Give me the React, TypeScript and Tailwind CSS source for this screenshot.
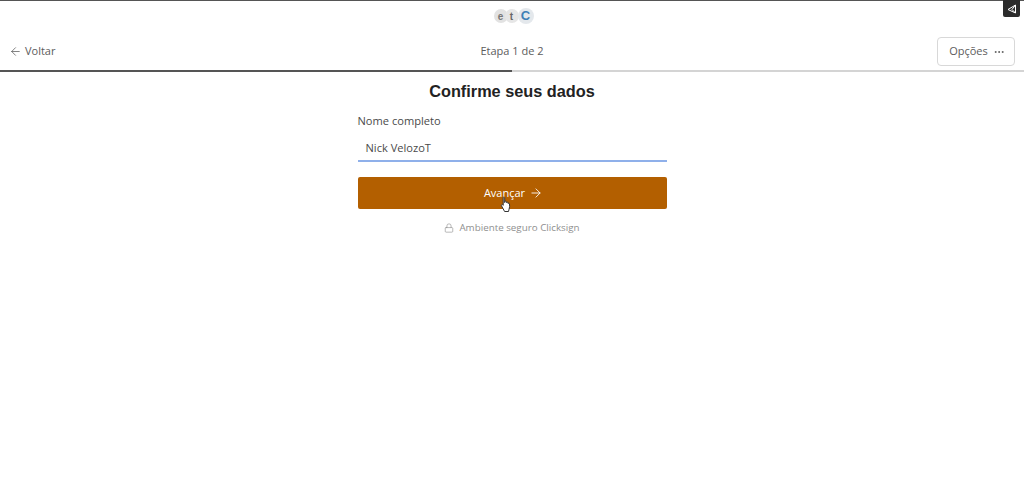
import { ArrowLeft, ArrowRight, Lock, Ellipsis } from "lucide-react";

function Logo() {
  return (
    <div className="flex h-[32px] items-center justify-center">
      <div className="relative flex items-center pb-[2px] pl-[3px]">
        <span className="flex h-[14px] w-[14px] items-center justify-center rounded-full bg-[#e2e2e2] font-['Liberation_Sans',sans-serif] text-[10px] font-bold text-[#777]">
          e
        </span>
        <span className="-ml-[3px] flex h-[14px] w-[14px] items-center justify-center rounded-full bg-[#e6e6e6] font-['Liberation_Sans',sans-serif] text-[10px] font-bold text-[#666]">
          t
        </span>
        <span className="-ml-[1px] flex h-[16px] w-[16px] items-center justify-center rounded-full bg-[#e4e8ec] font-['Liberation_Sans',sans-serif] text-[13px] font-bold text-[#3f7fb5]">
          C
        </span>
      </div>
    </div>
  );
}

function HandCursor() {
  return (
    <svg className="absolute left-[142px] top-[19px]" width="12" height="17" viewBox="0 0 12 17">
      <path
        d="M3.2 1.6c0-.8 1.5-.8 1.5 0v5l.2-1c.2-.7 1.4-.6 1.5.1l.1.9c.2-.7 1.3-.6 1.5.2l.1.8c.3-.6 1.3-.4 1.4.3.3 1.700.2 3.400-.4 5.200l-.6 2.400H4.600L1.500 9.800c-.5-.8.400-1.700 1.200-1l.5.5z"
        fill="#fff"
        stroke="#333"
        strokeWidth="1"
        strokeLinejoin="round"
      />
    </svg>
  );
}

export default function App() {
  return (
    <div className="relative min-h-[497px] bg-white font-['Open_Sans',sans-serif] text-[#4a4a4a]">
      <div className="h-[1px] bg-[#555]" />
      <Logo />

      <div className="flex h-[37px] items-center justify-between pl-[9px] pr-[9px]">
        <div className="flex w-[100px] items-center gap-[3px] text-[11px] text-[#5c5c5c]">
          <ArrowLeft size={13} strokeWidth={1.4} />
          <span>Voltar</span>
        </div>
        <span className="text-[11px] text-[#5c5c5c]">Etapa 1 de 2</span>
        <div className="flex w-[100px] justify-end">
          <div className="flex h-[29px] w-[78px] items-center justify-center gap-[5px] rounded-[4px] border border-[#d8d8d8] pl-[2px] text-[11px] text-[#5c5c5c]">
            <span>Opções</span>
            <Ellipsis size={12} strokeWidth={2} />
          </div>
        </div>
      </div>

      <div className="flex h-[2px] bg-[#d4d4d4]">
        <div className="w-1/2 bg-[#555]" />
      </div>

      <main className="mx-auto flex w-[309px] flex-col pt-[9px]">
        <h1 className="text-center font-['Liberation_Sans',sans-serif] text-[16.3px] leading-[20px] font-bold text-[#222]">
          Confirme seus dados
        </h1>
        <label className="mt-[12px] text-[11.1px] leading-[16px] text-[#4a4a4a]">Nome completo</label>
        <div className="mt-[7px] flex h-[26px] items-center border-b-2 border-[#8fb0ea] pl-[8px] text-[11.1px] text-[#4a4a4a]">
          Nick VelozoT
        </div>
        <div className="relative mt-[15px] flex h-[32px] items-center justify-center gap-[4px] rounded-[2px] bg-[#b35f00] pl-[3px] text-[11px] text-white">
          <span>Avançar</span>
          <ArrowRight size={14} strokeWidth={1.5} />
          <HandCursor />
        </div>
        <div className="mt-[12px] flex items-center justify-center gap-[5px] text-[9.8px] leading-[14px] text-[#8f8f8f]">
          <Lock size={10} strokeWidth={1.5} />
          <span>Ambiente seguro Clicksign</span>
        </div>
      </main>

      <div className="absolute right-[4px] top-0 flex h-[17px] w-[17px] items-center justify-center rounded-b-[2px] bg-[#2b2b2b]">
        <svg width="10" height="10" viewBox="0 0 10 10" fill="none" stroke="#fff" strokeWidth="1" strokeLinejoin="round">
          <path d="M8.500 1L1 5.500l7.500 3.500zM8.500 1L5 5.500l3.500 3.500" />
        </svg>
      </div>
    </div>
  );
}
